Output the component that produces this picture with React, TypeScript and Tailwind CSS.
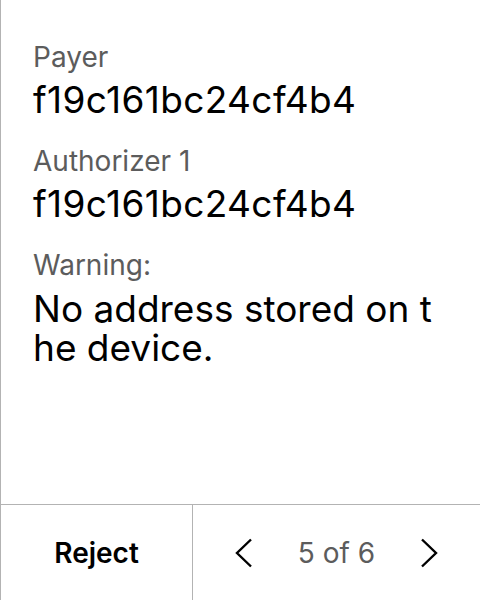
export default function App() {
  const rows = [
    { label: 'Payer', value: 'f19c161bc24cf4b4' },
    { label: 'Authorizer 1', value: 'f19c161bc24cf4b4' },
  ];

  return (
    <div
      className="w-[480px] h-[600px] bg-white border-l border-[#b3b3b3] flex flex-col text-black"
      style={{ fontFamily: 'Inter, "Liberation Sans", sans-serif' }}
    >
      {/* Details */}
      <div className="flex-1 pl-[32px] pr-[40px] pt-[41px] flex flex-col gap-[23px]">
        {rows.map((r) => (
          <div key={r.label} className="flex flex-col gap-[5px]">
            <span className="text-[28px] leading-[32px] text-[#5c5c5c]">{r.label}</span>
            <span className="text-[37px] leading-[44px] tracking-[0.01em] break-all">{r.value}</span>
          </div>
        ))}
        <div className="flex flex-col gap-[8px]">
          <span className="text-[28px] leading-[32px] text-[#5c5c5c]">Warning:</span>
          <span className="text-[37px] leading-[39px] break-all">No address stored on the device.</span>
        </div>
      </div>

      {/* Footer */}
      <div className="h-[96px] border-t border-[#b3b3b3] flex">
        <button className="w-[192px] border-r border-[#b3b3b3] flex items-center justify-center text-[28px] font-semibold">
          Reject
        </button>
        <div className="flex-1 flex items-center justify-between px-[42px]">
          <svg width="18" height="30" viewBox="0 0 18 30" fill="none" stroke="black" strokeWidth="2.4">
            <path d="M16 1.5 L2 15 L16 28.5" />
          </svg>
          <span className="text-[28px] text-[#5c5c5c]">5 of 6</span>
          <svg width="18" height="30" viewBox="0 0 18 30" fill="none" stroke="black" strokeWidth="2.4">
            <path d="M2 1.5 L16 15 L2 28.5" />
          </svg>
        </div>
      </div>
    </div>
  );
}
